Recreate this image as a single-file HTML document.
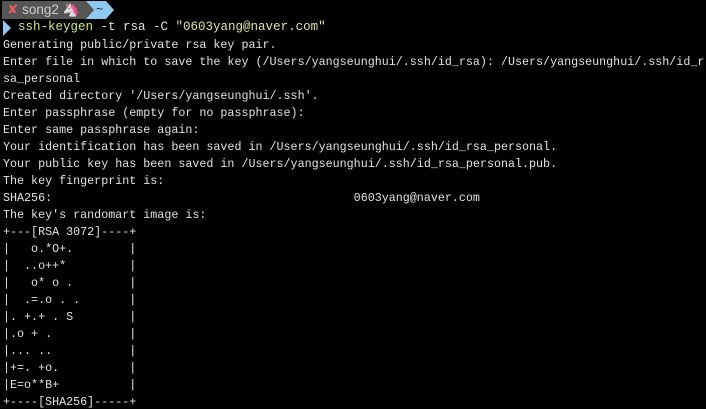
<!DOCTYPE html>
<html><head><meta charset="utf-8"><style>
html,body{margin:0;padding:0;background:#000;width:706px;height:409px;overflow:hidden}
body{position:relative;font-family:"Liberation Mono","DejaVu Sans Mono",monospace;font-size:11.7px;color:#e2e2e2}
.bar{position:absolute;top:1px;left:2px;height:18px;display:flex;align-items:center}
.seg1{background:#555;color:#ccc;height:18px;line-height:18px;padding:0 4px 0 5px;font-family:"Liberation Sans",sans-serif;font-size:13.5px;white-space:nowrap;width:84px;box-sizing:border-box;overflow:hidden}
.x{color:#e06060}
.seg2{background:#8fc8f0;height:18px;width:20px;position:relative;color:#222;line-height:18px;padding-left:10px;box-sizing:border-box;font-size:12px}
.seg2:before{content:"";position:absolute;left:0;top:0;border-left:8px solid #555;border-top:9px solid transparent;border-bottom:9px solid transparent}
.seg2:after{content:"";position:absolute;right:-8px;top:0;border-left:8px solid #8fc8f0;border-top:9px solid transparent;border-bottom:9px solid transparent}
.arrow{position:absolute;left:3px;top:20px;width:0;height:0;border-left:8px solid #8fc8f0;border-top:8px solid transparent;border-bottom:8px solid transparent}
.cmd{position:absolute;left:3px;top:19px;white-space:pre;line-height:17px;font-size:12.5px}
.g{color:#c8e87a}
pre{position:absolute;left:3px;top:37px;margin:0;font:inherit;line-height:17px;white-space:pre}
</style></head><body>
<div class="bar"><div class="seg1"><span class="x">✘</span> song2 🦄</div><div class="seg2">~</div></div>
<div class="arrow"></div>
<div class="cmd">  <span class="g">ssh-keygen</span> -t rsa -C <span style="color:#e8e0a0">"0603yang@naver.com"</span></div>
<pre>Generating public/private rsa key pair.
Enter file in which to save the key (/Users/yangseunghui/.ssh/id_rsa): /Users/yangseunghui/.ssh/id_r
sa_personal
Created directory '/Users/yangseunghui/.ssh'.
Enter passphrase (empty for no passphrase):
Enter same passphrase again:
Your identification has been saved in /Users/yangseunghui/.ssh/id_rsa_personal.
Your public key has been saved in /Users/yangseunghui/.ssh/id_rsa_personal.pub.
The key fingerprint is:
SHA256:                                           0603yang@naver.com
The key's randomart image is:
+---[RSA 3072]----+
|   o.*O+.        |
|  ..o++*         |
|   o* o .        |
|  .=.o . .       |
|. +.+ . S        |
|.o + .           |
|... ..           |
|+=. +o.          |
|E=o**B+          |
+----[SHA256]-----+</pre>
</body></html>
